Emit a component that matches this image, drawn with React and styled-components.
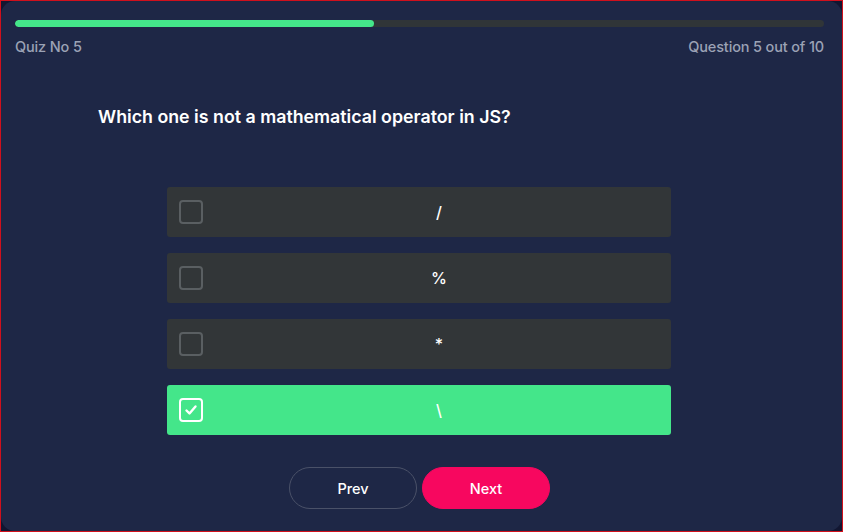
import React, { useState } from "react";
import styled, { createGlobalStyle } from "styled-components";

const Global = createGlobalStyle`
  html, body { margin: 0; padding: 0; background: #111528; }
  body { font-family: Inter, "Noto Sans", sans-serif; }
  * { box-sizing: border-box; }
`;

const Frame = styled.div`
  width: 843px;
  height: 532px;
  border: 1px solid #d0101c;
  background: #121631;
`;

const Card = styled.div`
  height: 100%;
  background: #1e2746;
  border-radius: 14px;
  padding: 19px 18px 0 14px;
  display: flex;
  flex-direction: column;
`;

const Track = styled.div`
  height: 7px;
  border-radius: 4px;
  background: #303538;
  overflow: hidden;
`;

const Fill = styled.div`
  height: 100%;
  background: #44e68a;
  border-radius: 4px;
`;

const Meta = styled.div`
  display: flex;
  justify-content: space-between;
  margin-top: 11px;
  font-size: 14.5px;
  font-weight: 500;
  color: #9ba2b5;
  letter-spacing: -0.15px;
`;

const Question = styled.h2`
  margin: 51px 0 0 83px;
  font-size: 17.8px;
  font-weight: 600;
  color: #ffffff;
  letter-spacing: 0;
`;

const Options = styled.div`
  margin: 60px 0 0 152px;
  width: 504px;
  display: flex;
  flex-direction: column;
  gap: 16px;
`;

const Option = styled.div`
  height: 50px;
  border-radius: 3px;
  background: ${(p) => (p.$selected ? "#44e68a" : "#323638")};
  display: flex;
  align-items: center;
  padding-left: 12px;
  cursor: pointer;
`;

const Box = styled.div`
  width: 24px;
  height: 24px;
  border-radius: 4px;
  border: 2px solid ${(p) => (p.$selected ? "#ffffff" : "#5a5f62")};
  display: flex;
  align-items: center;
  justify-content: center;
`;

const Label = styled.span`
  flex: 1;
  text-align: center;
  color: #ffffff;
  font-size: 16px;
  font-weight: 500;
  padding-left: 4px;
`;

const Buttons = styled.div`
  margin-top: 32px;
  display: flex;
  justify-content: center;
  gap: 5px;
`;

const Btn = styled.button`
  width: 128px;
  height: 42px;
  border-radius: 21px;
  font-family: Inter, "Noto Sans", sans-serif;
  font-size: 14.5px;
  font-weight: 500;
  color: #ffffff;
  cursor: pointer;
  border: 1px solid ${(p) => (p.$primary ? "#f7075f" : "#4a5168")};
  background: ${(p) => (p.$primary ? "#f7075f" : "transparent")};
`;

const options = ["/", "%", "*", "\\"];

export default function App() {
  const [sel, setSel] = useState(3);
  return (
    <>
      <Global />
      <Frame>
        <Card>
          <Track>
            <Fill style={{ width: `${(359 / 809) * 100}%` }} />
          </Track>
          <Meta>
            <span>Quiz No 5</span>
            <span>Question 5 out of 10</span>
          </Meta>
          <Question>Which one is not a mathematical operator in JS?</Question>
          <Options>
            {options.map((o, i) => (
              <Option key={i} $selected={sel === i} onClick={() => setSel(i)}>
                <Box $selected={sel === i}>
                  {sel === i && (
                    <svg width="14" height="14" viewBox="0 0 14 14">
                      <path d="M2.5 7.5 L5.5 10.5 L11.5 3.5" fill="none" stroke="#fff" strokeWidth="2.4" strokeLinecap="round" strokeLinejoin="round" />
                    </svg>
                  )}
                </Box>
                <Label>{o}</Label>
              </Option>
            ))}
          </Options>
          <Buttons>
            <Btn>Prev</Btn>
            <Btn $primary>Next</Btn>
          </Buttons>
        </Card>
      </Frame>
    </>
  );
}
